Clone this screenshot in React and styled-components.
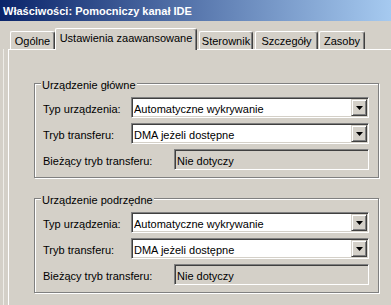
import styled, { createGlobalStyle } from "styled-components"

const GlobalStyle = createGlobalStyle`
  html, body {
    margin: 0;
    padding: 0;
    background: #d4d0c8;
    overflow: hidden;
  }
  body {
    font-family: "Liberation Sans", Arial, sans-serif;
    font-size: 11px;
    color: #000;
  }
`

const Window = styled.div`
  width: 391px;
  height: 305px;
  overflow: hidden;
  background: #d4d0c8;
  display: flex;
  flex-direction: column;
`

const TitleBar = styled.div`
  height: 21px;
  flex-shrink: 0;
  display: flex;
  align-items: center;
  padding-left: 3px;
  background: linear-gradient(to right, #0a246a 0%, #a6caf0 100%);
  color: #fff;
  font-weight: bold;
  font-size: 11px;
  white-space: nowrap;
`

const TabStrip = styled.div`
  height: 28px;
  flex-shrink: 0;
  display: flex;
  align-items: flex-end;
  padding-left: 10px;
  position: relative;
  z-index: 1;
`

const Tab = styled.div`
  box-sizing: border-box;
  width: ${(p) => p.$w}px;
  margin-left: ${(p) => p.$ml || 0}px;
  height: ${(p) => (p.$active ? 22 : 18)}px;
  margin-bottom: ${(p) => (p.$active ? -1 : 0)}px;
  padding-top: 3px;
  line-height: 13px;
  text-align: center;
  white-space: nowrap;
  background: #d4d0c8;
  border-top: 1px solid #fff;
  border-left: 1px solid #fff;
  border-right: 1px solid #404040;
  border-radius: 2px 3px 0 0;
  box-shadow: inset -1px 0 0 #808080;
`

const PanelArea = styled.div`
  flex: 1;
  display: flex;
  margin-left: 3px;
  border-left: 1px solid #eeede8;
  padding-left: 4px;
`

const Panel = styled.div`
  flex: 1;
  min-width: 420px;
  border-top: 1px solid #fff;
  border-left: 1px solid #fff;
  padding: 33px 0 0 25px;
  display: flex;
  flex-direction: column;
  gap: 20px;
`

const GroupBox = styled.div`
  position: relative;
  box-sizing: border-box;
  width: 345px;
  border: 1px solid #808080;
  box-shadow: inset 1px 1px 0 #fff, 1px 1px 0 #fff;
  padding: 13px 9px 7px 8px;
  display: flex;
  flex-direction: column;
  gap: 5px;
`

const Legend = styled.span`
  position: absolute;
  top: -5px;
  left: 6px;
  padding: 0 1px;
  line-height: 13px;
  background: #d4d0c8;
  white-space: nowrap;
`

const Row = styled.div`
  display: flex;
  align-items: center;
  height: 21px;
`

const Label = styled.span`
  width: ${(p) => p.$w}px;
  flex-shrink: 0;
  padding-top: 3px;
  line-height: 13px;
  white-space: nowrap;
`

const Sunken = styled.div`
  flex: 1;
  box-sizing: border-box;
  height: 21px;
  display: flex;
  align-items: center;
  padding-left: 2px;
  background: ${(p) => (p.$readOnly ? "#d4d0c8" : "#fff")};
  border: 1px solid;
  border-color: #808080 #fff #fff #808080;
  box-shadow: inset 1px 1px 0 #404040, inset -1px -1px 0 #d4d0c8;
`

const FieldText = styled.span`
  flex: 1;
  padding-top: 3px;
  line-height: 13px;
  white-space: nowrap;
  overflow: hidden;
`

const DropButton = styled.div`
  box-sizing: border-box;
  width: 16px;
  height: 17px;
  margin-right: 1px;
  flex-shrink: 0;
  display: flex;
  align-items: center;
  justify-content: center;
  background: #d4d0c8;
  border: 1px solid;
  border-color: #d4d0c8 #404040 #404040 #d4d0c8;
  box-shadow: inset 1px 1px 0 #fff, inset -1px -1px 0 #808080;
`

const Arrow = () => (
  <svg width="7" height="4" viewBox="0 0 7 4">
    <path d="M0 0h7L3.5 4z" fill="#000" />
  </svg>
)

const Combo = ({ value }) => (
  <Sunken>
    <FieldText>{value}</FieldText>
    <DropButton>
      <Arrow />
    </DropButton>
  </Sunken>
)

const DeviceGroup = ({ title }) => (
  <GroupBox>
    <Legend>{title}</Legend>
    <Row>
      <Label $w={88}>Typ urządzenia:</Label>
      <Combo value="Automatyczne wykrywanie" />
    </Row>
    <Row>
      <Label $w={88}>Tryb transferu:</Label>
      <Combo value="DMA jeżeli dostępne" />
    </Row>
    <Row>
      <Label $w={131}>Bieżący tryb transferu:</Label>
      <Sunken $readOnly>
        <FieldText>Nie dotyczy</FieldText>
      </Sunken>
    </Row>
  </GroupBox>
)

const tabs = [
  { label: "Ogólne", w: 45 },
  { label: "Ustawienia zaawansowane", w: 142, active: true },
  { label: "Sterownik", w: 54, ml: 2 },
  { label: "Szczegóły", w: 63, ml: 2 },
  { label: "Zasoby", w: 46, ml: 1 },
]

export default function App() {
  return (
    <>
      <GlobalStyle />
      <Window>
        <TitleBar>Właściwości: Pomocniczy kanał IDE</TitleBar>
        <TabStrip>
          {tabs.map((t) => (
            <Tab key={t.label} $w={t.w} $ml={t.ml} $active={t.active}>
              {t.label}
            </Tab>
          ))}
        </TabStrip>
        <PanelArea>
          <Panel>
            <DeviceGroup title="Urządzenie główne" />
            <DeviceGroup title="Urządzenie podrzędne" />
          </Panel>
        </PanelArea>
      </Window>
    </>
  )
}
